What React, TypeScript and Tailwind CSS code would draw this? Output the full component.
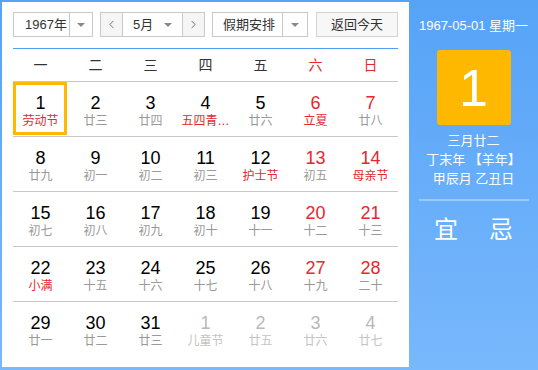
import { ChevronLeft, ChevronRight } from 'lucide-react'

type Day = {
  n: number
  sub: string
  red?: boolean
  other?: boolean
}

const weekdays = ['一', '二', '三', '四', '五', '六', '日']

const days: Day[] = [
  { n: 1, sub: '劳动节', red: true },
  { n: 2, sub: '廿三' },
  { n: 3, sub: '廿四' },
  { n: 4, sub: '五四青…', red: true },
  { n: 5, sub: '廿六' },
  { n: 6, sub: '立夏', red: true },
  { n: 7, sub: '廿八' },
  { n: 8, sub: '廿九' },
  { n: 9, sub: '初一' },
  { n: 10, sub: '初二' },
  { n: 11, sub: '初三' },
  { n: 12, sub: '护士节', red: true },
  { n: 13, sub: '初五' },
  { n: 14, sub: '母亲节', red: true },
  { n: 15, sub: '初七' },
  { n: 16, sub: '初八' },
  { n: 17, sub: '初九' },
  { n: 18, sub: '初十' },
  { n: 19, sub: '十一' },
  { n: 20, sub: '十二' },
  { n: 21, sub: '十三' },
  { n: 22, sub: '小满', red: true },
  { n: 23, sub: '十五' },
  { n: 24, sub: '十六' },
  { n: 25, sub: '十七' },
  { n: 26, sub: '十八' },
  { n: 27, sub: '十九' },
  { n: 28, sub: '二十' },
  { n: 29, sub: '廿一' },
  { n: 30, sub: '廿二' },
  { n: 31, sub: '廿三' },
  { n: 1, sub: '儿童节', other: true },
  { n: 2, sub: '廿五', other: true },
  { n: 3, sub: '廿六', other: true },
  { n: 4, sub: '廿七', other: true },
]

const font = { fontFamily: '"Liberation Sans", "Noto Sans CJK SC", sans-serif' }

function Caret() {
  return <span className="block w-0 h-0 border-x-[4px] border-x-transparent border-t-[4px] border-t-[#888]" />
}

function Select({ label, w, split }: { label: string; w: string; split: string }) {
  return (
    <div className={`flex h-[25px] border border-[#c9c9c9] bg-white ${w}`}>
      <div className={`flex items-center text-[13px] text-[#333] ${split}`}>{label}</div>
      <div className="flex flex-1 items-center justify-center border-l border-[#c9c9c9]">
        <Caret />
      </div>
    </div>
  )
}

export default function App() {
  const rows = [0, 1, 2, 3, 4].map((r) => days.slice(r * 7, r * 7 + 7))

  return (
    <div className="flex w-[538px] h-[370px] bg-gradient-to-b from-[#56a3f7] to-[#78b8fc]" style={font}>
      {/* Calendar */}
      <div className="mt-[2px] mb-[3px] ml-[2px] w-[407px] bg-white px-[11px] pt-[10px]">
        <div className="flex h-[25px]">
          <Select label="1967年" w="w-[80px]" split="w-[55px] pl-[11px]" />
          <div className="ml-[7px] flex h-[25px] w-[105px] border border-[#c9c9c9] bg-white">
            <div className="flex w-[22px] items-center justify-center bg-[#f5f5f5] border-r border-[#c9c9c9]">
              <ChevronLeft className="h-[13px] w-[13px] text-[#555]" strokeWidth={1.5} />
            </div>
            <div className="flex flex-1 items-center pl-[10px] pr-[10px] text-[13px] text-[#333]">
              <span className="flex-1">5月</span>
              <Caret />
            </div>
            <div className="flex w-[22px] items-center justify-center bg-[#f5f5f5] border-l border-[#c9c9c9]">
              <ChevronRight className="h-[13px] w-[13px] text-[#555]" strokeWidth={1.5} />
            </div>
          </div>
          <div className="ml-[7px]">
            <Select label="假期安排" w="w-[96px]" split="w-[69px] pl-[10px]" />
          </div>
          <div className="ml-[8px] flex h-[25px] w-[82px] items-center justify-center border border-[#d3d3d3] bg-[#f7f7f7] text-[13px] text-[#333]">
            返回今天
          </div>
        </div>

        <div className="mt-[11px] h-[1px] bg-[#4f9ff6]" />

        <div className="grid h-[33px] grid-cols-7 border-b border-[#c8c8c8]">
          {weekdays.map((d, i) => (
            <div key={d} className={`flex items-center justify-center text-[14px] ${i > 4 ? 'text-[#e8262f]' : 'text-[#333]'}`}>
              {d}
            </div>
          ))}
        </div>

        {rows.map((row, r) => (
          <div key={r} className={`grid grid-cols-7 h-[55px] ${r < 4 ? 'border-b border-[#c8c8c8]' : ''}`}>
            {row.map((d, i) => {
              const weekend = i > 4
              const numColor = d.other ? 'text-[#b8b8b8]' : weekend ? 'text-[#e8262f]' : 'text-black'
              const subColor = d.other ? 'text-[#c4c4c4]' : d.red ? 'text-[#e8262f]' : 'text-[#999]'
              const selected = r === 0 && i === 0
              return (
                <div key={i} className="relative flex flex-col items-center pt-[11px]">
                  {selected && <div className="absolute left-0 top-0 h-[53px] w-[54px] border-[3px] border-[#ffb800]" />}
                  <div className={`text-[18px] leading-[20px] ${numColor}`}>{d.n}</div>
                  <div className={`text-[12px] leading-[16px] whitespace-nowrap ${subColor}`}>{d.sub}</div>
                </div>
              )
            })}
          </div>
        ))}
      </div>

      {/* Side panel */}
      <div className="flex flex-1 flex-col items-center text-white">
        <div className="mt-[17px] text-[13px] leading-[18px]">1967-05-01 星期一</div>
        <div className="mt-[15px] flex h-[75px] w-[74px] items-center justify-center rounded-[3px] bg-[#ffb800] text-[52px] leading-none">
          1
        </div>
        <div className="mt-[6px] flex flex-col items-center text-[13px] leading-[19px]">
          <div>三月廿二</div>
          <div>丁末年 【羊年】</div>
          <div>甲辰月 乙丑日</div>
        </div>
        <div className="mt-[11px] h-[2px] w-[110px] bg-[#9ccbfb]" />
        <div className="mt-[15px] flex gap-[31px] text-[24px] leading-[28px]">
          <span>宜</span>
          <span>忌</span>
        </div>
      </div>
    </div>
  )
}
